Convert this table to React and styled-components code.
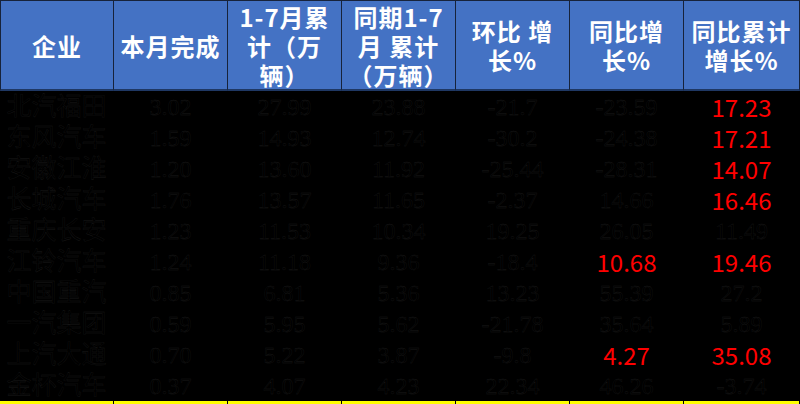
import React from "react";
import styled, { createGlobalStyle } from "styled-components";

const Global = createGlobalStyle`
  html, body {
    margin: 0;
    padding: 0;
    background: #000;
    overflow: hidden;
  }
`;

const Table = styled.div`
  width: 800px;
  height: 100vh;
  max-height: 404px;
  display: grid;
  grid-template-columns: repeat(6, 114px) 1fr;
  grid-template-rows: 91px repeat(10, 1fr) 3px;
  background: #000;
  overflow: hidden;
`;

const Head = styled.div`
  box-sizing: border-box;
  background: #4472c4;
  border-top: 1px solid #17233b;
  border-bottom: 2px solid #1f3864;
  border-right: 1px solid #17233b;
  border-left: ${(p) => (p.$first ? "1px solid #17233b" : "none")};
  display: flex;
  flex-direction: column;
  align-items: center;
  justify-content: center;
  text-align: center;
  color: #fff;
  font-family: "Noto Sans CJK SC", "Noto Sans", sans-serif;
  font-weight: 700;
  font-size: 24px;
  letter-spacing: 1px;
`;

const HeadLine = styled.div`
  height: 29px;
  line-height: 29px;
`;

const Cell = styled.div`
  display: flex;
  align-items: center;
  justify-content: center;
  min-height: 0;
  border-right: 1px solid #000;
  font-family: ${(p) =>
    p.$red
      ? '"Noto Sans CJK SC", "Noto Sans", sans-serif'
      : '"Liberation Serif", "Noto Sans CJK SC", serif'};
  font-size: ${(p) => (p.$name ? "25px" : "24px")};
  line-height: 28px;
  white-space: nowrap;
  color: ${(p) => (p.$red ? "#ff0000" : "#000")};
  -webkit-text-stroke: ${(p) => (p.$red ? "0" : "0.3px #1a1a1a")};
`;

const Rule = styled.div`
  background: #ffff00;
  border-right: 1px solid #000;
`;

const heads = [
  ["企业"],
  ["本月完成"],
  ["1-7月累", "计（万", "辆）"],
  ["同期1-7", "月 累计", "（万辆）"],
  ["环比 增", "长%"],
  ["同比增", "长%"],
  ["同比累计", "增长%"],
];

// a trailing * marks the cells highlighted in red
const rows = [
  ["北汽福田", "3.02", "27.99", "23.88", "-21.7", "-23.59", "17.23*"],
  ["东风汽车", "1.59", "14.93", "12.74", "-30.2", "-24.38", "17.21*"],
  ["安徽江淮", "1.20", "13.60", "11.92", "-25.44", "-28.31", "14.07*"],
  ["长城汽车", "1.76", "13.57", "11.65", "-2.37", "14.66", "16.46*"],
  ["重庆长安", "1.23", "11.53", "10.34", "19.25", "26.05", "11.49"],
  ["江铃汽车", "1.24", "11.18", "9.36", "-18.4", "10.68*", "19.46*"],
  ["中国重汽", "0.85", "6.81", "5.36", "13.23", "55.39", "27.2"],
  ["一汽集团", "0.59", "5.95", "5.62", "-21.78", "35.64", "5.89"],
  ["上汽大通", "0.70", "5.22", "3.87", "-9.8", "4.27*", "35.08*"],
  ["金杯汽车", "0.37", "4.07", "4.23", "22.34", "46.26", "-3.74"],
];

const App = () => {
  return (
    <>
      <Global />
      <Table>
        {heads.map((lines, i) => (
          <Head key={i} $first={i === 0}>
            {lines.map((l, j) => (
              <HeadLine key={j}>{l}</HeadLine>
            ))}
          </Head>
        ))}
        {rows.map((row, r) =>
          row.map((v, c) => {
            const red = v.endsWith("*");
            return (
              <Cell key={r + "-" + c} $red={red} $name={c === 0}>
                {red ? v.slice(0, -1) : v}
              </Cell>
            );
          })
        )}
        {heads.map((_, i) => (
          <Rule key={"rule" + i} />
        ))}
      </Table>
    </>
  );
};

export default App;
